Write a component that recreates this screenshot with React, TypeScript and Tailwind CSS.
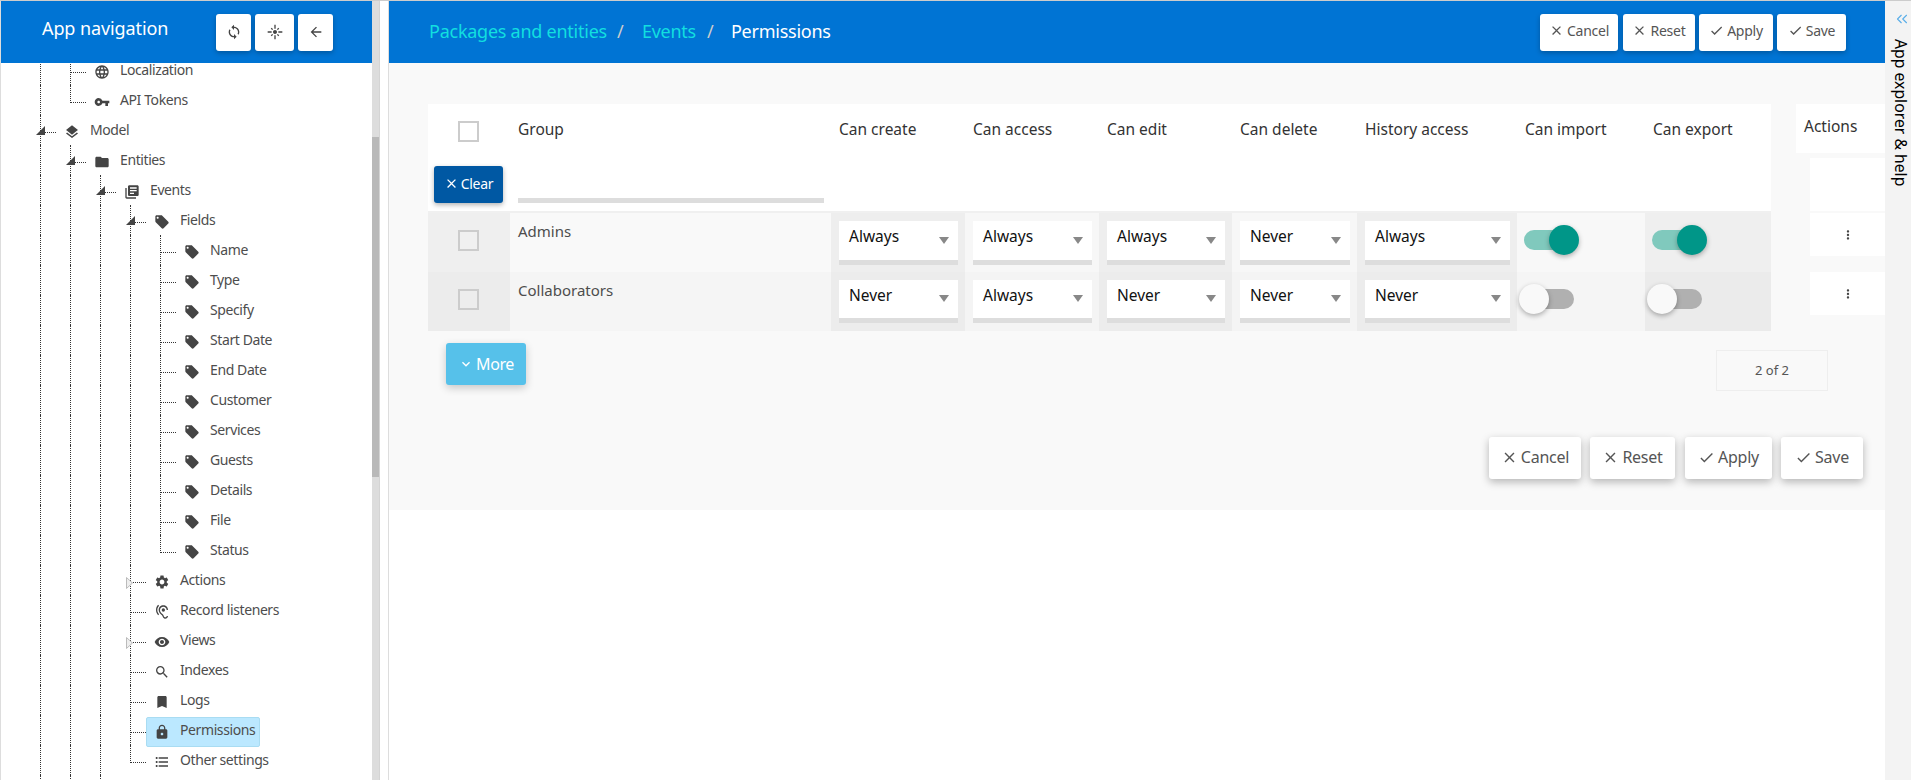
import type { ReactNode } from "react";
import type { IconType } from "react-icons";
import { ChevronsLeft } from "lucide-react";
import {
  MdArrowBack,
  MdBookmark,
  MdCheck,
  MdClose,
  MdExpandMore,
  MdFlare,
  MdFolder,
  MdFormatListBulleted,
  MdHearing,
  MdLanguage,
  MdLayers,
  MdLibraryBooks,
  MdLocalOffer,
  MdLock,
  MdMoreVert,
  MdSearch,
  MdSettings,
  MdSync,
  MdVisibility,
  MdVpnKey,
} from "react-icons/md";

type TreeRow = {
  label: string;
  icon: IconType;
  depth: number;
  last?: boolean;
  toggle?: "open" | "closed";
  active?: boolean;
};

const treeRows: TreeRow[] = [
  { label: "Localization", icon: MdLanguage, depth: 1 },
  { label: "API Tokens", icon: MdVpnKey, depth: 1, last: true },
  { label: "Model", icon: MdLayers, depth: 0, toggle: "open" },
  { label: "Entities", icon: MdFolder, depth: 1, toggle: "open" },
  { label: "Events", icon: MdLibraryBooks, depth: 2, toggle: "open" },
  { label: "Fields", icon: MdLocalOffer, depth: 3, toggle: "open" },
  { label: "Name", icon: MdLocalOffer, depth: 4 },
  { label: "Type", icon: MdLocalOffer, depth: 4 },
  { label: "Specify", icon: MdLocalOffer, depth: 4 },
  { label: "Start Date", icon: MdLocalOffer, depth: 4 },
  { label: "End Date", icon: MdLocalOffer, depth: 4 },
  { label: "Customer", icon: MdLocalOffer, depth: 4 },
  { label: "Services", icon: MdLocalOffer, depth: 4 },
  { label: "Guests", icon: MdLocalOffer, depth: 4 },
  { label: "Details", icon: MdLocalOffer, depth: 4 },
  { label: "File", icon: MdLocalOffer, depth: 4 },
  { label: "Status", icon: MdLocalOffer, depth: 4, last: true },
  { label: "Actions", icon: MdSettings, depth: 3, toggle: "closed" },
  { label: "Record listeners", icon: MdHearing, depth: 3 },
  { label: "Views", icon: MdVisibility, depth: 3, toggle: "closed" },
  { label: "Indexes", icon: MdSearch, depth: 3 },
  { label: "Logs", icon: MdBookmark, depth: 3 },
  { label: "Permissions", icon: MdLock, depth: 3, active: true },
  { label: "Other settings", icon: MdFormatListBulleted, depth: 3, last: true },
];

function Guide() {
  return <span className="h-[30px] w-[30px] shrink-0 border-l border-dotted border-[#333]" />;
}

function Row({ row }: { row: TreeRow }) {
  const Icon = row.icon;
  return (
    <div className="flex h-[30px] pl-[39px]">
      {Array.from({ length: row.depth }, (_, i) => (
        <Guide key={i} />
      ))}
      {/* connector into the node, the toggle triangle sits on top of it */}
      <span className={`relative w-[16px] shrink-0 border-l border-dotted border-[#333] ${row.last ? "h-[18px]" : "h-[30px]"}`}>
        <span className="block h-[18px] border-b border-dotted border-[#333]" />
        {row.toggle === "open" && (
          <svg width="9" height="9" viewBox="0 0 9 9" className="absolute left-[-5px] top-[11px]">
            <path d="M9 0V9H0Z" fill="#444" />
          </svg>
        )}
        {row.toggle === "closed" && (
          <svg width="7" height="12" viewBox="0 0 7 12" className="absolute left-[-5px] top-[12px]">
            <path d="M0.5 0.5L6.5 6L0.5 11.5Z" fill="#eee" stroke="#bbb" />
          </svg>
        )}
      </span>
      <div
        className={`mt-[2px] flex h-[30px] items-center gap-[10px] rounded-[2px] border pb-[6px] pl-[7px] pr-[4px] text-[14px] tracking-[-0.4px] text-[#4d4d4d] ${
          row.active ? "border-[#a9dcf2] bg-[#bbe8ff]" : "border-transparent"
        }`}
      >
        <Icon size={16} className="mt-[5px] shrink-0 text-[#444]" />
        <span className="whitespace-nowrap">{row.label}</span>
      </div>
    </div>
  );
}

function Btn({ className, children }: { className: string; children: ReactNode }) {
  return (
    <button className={`flex shrink-0 items-center justify-center rounded-[3px] ${className}`}>
      {children}
    </button>
  );
}

function TopBtn({ w, icon: Icon, label }: { w: string; icon: IconType; label: string }) {
  return (
    <Btn className={`${w} h-[37px] gap-[3px] bg-white pb-[3px] text-[14px] tracking-[-0.25px] text-[#555] shadow-[0_2px_5px_rgba(0,0,0,0.25)]`}>
      <Icon size={15} />
      {label}
    </Btn>
  );
}

function BottomBtn({ w, icon: Icon, label }: { w: string; icon: IconType; label: string }) {
  return (
    <Btn className={`${w} h-[42px] gap-[3px] bg-white pb-[2px] text-[16px] tracking-[-0.25px] text-[#555] shadow-[0_3px_8px_rgba(0,0,0,0.28)]`}>
      <Icon size={17} />
      {label}
    </Btn>
  );
}

function Checkbox({ bg }: { bg: string }) {
  return <span className={`block h-[21px] w-[21px] border-2 border-[#ccc] ${bg}`} />;
}

function Select({ value, h }: { value: string; h: string }) {
  return (
    <div className={`flex ${h} items-center justify-between border-b-[5px] border-[#ddd] bg-white pb-[7px] pl-[10px] pr-[9px] text-[15.5px] text-[#111]`}>
      {value}
      <svg width="10" height="7" viewBox="0 0 10 7" className="mt-[6px]">
        <path d="M0 0H10L5 7Z" fill="#888" />
      </svg>
    </div>
  );
}

function Toggle({ on }: { on: boolean }) {
  return (
    <div className={`relative h-[20px] w-[50px] rounded-full ${on ? "bg-[#80c9bd]" : "bg-[#b0b0b0]"}`}>
      <span
        className={`absolute top-[-5px] h-[30px] w-[30px] rounded-full shadow-[0_2px_5px_rgba(0,0,0,0.3)] ${
          on ? "left-[25px] bg-[#009688]" : "left-[-5px] bg-[#f9f9f9]"
        }`}
      />
    </div>
  );
}

const headerCols = ["Can create", "Can access", "Can edit", "Can delete", "History access", "Can import", "Can export"];

const permRows = [
  { name: "Admins", values: ["Always", "Always", "Always", "Never", "Always"], on: true, sel: "h-[44px]" },
  { name: "Collaborators", values: ["Never", "Always", "Never", "Never", "Never"], on: false, sel: "h-[43px]" },
];

export default function App() {
  return (
    <div className="flex h-screen w-full overflow-hidden border-t border-[#ccc] bg-white [font-family:'Noto_Sans',sans-serif]">
      {/* left navigation */}
      <aside className="flex h-full w-[389px] shrink-0 border-x border-l-[#ddd] border-r-[#ddd]">
        <div className="flex h-full w-[371px] shrink-0 flex-col overflow-hidden">
          <div className="relative z-10 flex h-[62px] shrink-0 items-center bg-[#0074d4] pl-[41px]">
            <span className="w-[174px] pb-[8px] text-[18px] tracking-[-0.1px] text-white">App navigation</span>
            <div className="flex gap-[4px]">
              <Btn className="h-[37px] w-[35px] bg-white text-[#444] shadow-[0_2px_5px_rgba(0,0,0,0.25)]">
                <MdSync size={16} />
              </Btn>
              <Btn className="h-[37px] w-[39px] bg-white text-[#444] shadow-[0_2px_5px_rgba(0,0,0,0.25)]">
                <MdFlare size={16} />
              </Btn>
              <Btn className="h-[37px] w-[35px] bg-white text-[#444] shadow-[0_2px_5px_rgba(0,0,0,0.25)]">
                <MdArrowBack size={16} />
              </Btn>
            </div>
          </div>
          <div className="mt-[-8px]">
            {treeRows.map((row) => (
              <Row key={row.label} row={row} />
            ))}
            <div className="flex h-[30px] pl-[39px]">
              <Guide />
              <Guide />
              <Guide />
            </div>
          </div>
        </div>
        <div className="h-full w-[8px] shrink-0 border-r border-[#d4d4d4] bg-[#ddd]">
          <div className="mt-[136px] h-[340px] bg-[#b9b9b9]" />
        </div>
      </aside>

      {/* main content */}
      <main className="flex min-w-0 flex-1 flex-col">
        <header className="flex h-[62px] shrink-0 items-center justify-between bg-[#0074d4] pl-[40px] pr-[39px]">
          <nav className="flex items-center pb-[2px] text-[18px] tracking-[-0.25px]">
            <span className="text-[#12dfe0]">Packages and entities</span>
            <span className="w-[35px] pl-[10px] text-[#ccc]">/</span>
            <span className="text-[#12dfe0]">Events</span>
            <span className="w-[35px] pl-[11px] text-[#ccc]">/</span>
            <span className="text-white">Permissions</span>
          </nav>
          <div className="flex">
            <TopBtn w="w-[78px] mr-[5px]" icon={MdClose} label="Cancel" />
            <TopBtn w="w-[72px] mr-[4px]" icon={MdClose} label="Reset" />
            <TopBtn w="w-[74px] mr-[4px]" icon={MdCheck} label="Apply" />
            <TopBtn w="w-[69px]" icon={MdCheck} label="Save" />
          </div>
        </header>

        <section className="h-[447px] bg-[#f9f9f9] pl-[39px] pt-[41px]">
          <div className="flex items-start">
            <div className="grid w-[1343px] grid-cols-[82px_321px_134px_134px_133px_125px_160px_128px_126px] bg-[#f0f0f0]">
              {/* head */}
              <div className="flex h-[107px] flex-col items-start justify-between bg-white pb-[8px] pl-[6px] pt-[17px]">
                <span className="ml-[24px]">
                  <Checkbox bg="bg-white" />
                </span>
                <Btn className="h-[37px] w-[69px] gap-[2px] bg-[#0058a3] pb-[2px] text-[14px] tracking-[-0.3px] text-white shadow-[0_2px_5px_rgba(0,0,0,0.3)]">
                  <MdClose size={15} />
                  Clear
                </Btn>
              </div>
              <div className="flex h-[107px] flex-col justify-between bg-white pb-[8px] pl-[8px] pr-[7px] pt-[14px] text-[15.5px] leading-[22px] text-[#333]">
                Group
                <div className="h-[5px] bg-[#ddd]" />
              </div>
              {headerCols.map((col) => (
                <div key={col} className="h-[107px] bg-white pl-[8px] pt-[14px] text-[15.5px] leading-[22px] text-[#333]">
                  {col}
                </div>
              ))}
              <div className="col-span-9 h-[2px]" />

              {/* body */}
              {permRows.map((row, r) => (
                <div key={row.name} className="contents">
                  <div className={`flex h-[59px] items-start pl-[30px] pt-[17px] ${r === 0 ? "bg-[#efefef]" : "bg-[#ececec]"}`}>
                    <Checkbox bg={r === 0 ? "bg-[#f0f0f0]" : "bg-[#ededed]"} />
                  </div>
                  <div className={`h-[59px] pl-[8px] pt-[7px] text-[15px] leading-[22px] text-[#4d4d4d] ${r === 0 ? "bg-[#f9f9f9]" : "bg-[#f5f5f5]"}`}>
                    {row.name}
                  </div>
                  {row.values.map((v, c) => (
                    <div
                      key={c}
                      className={`h-[59px] pl-[8px] pr-[7px] pt-[8px] ${
                        c % 2 === 0
                          ? r === 0 ? "bg-[#eeeeee]" : "bg-[#ececec]"
                          : r === 0 ? "bg-[#f7f7f7]" : "bg-[#f4f4f4]"
                      }`}
                    >
                      <Select value={v} h={row.sel} />
                    </div>
                  ))}
                  <div className={`h-[59px] pl-[7px] pt-[17px] ${r === 0 ? "bg-[#f8f8f8]" : "bg-[#f5f5f5]"}`}>
                    <Toggle on={row.on} />
                  </div>
                  <div className={`h-[59px] pl-[7px] pt-[17px] ${r === 0 ? "bg-[#efefef]" : "bg-[#ebebeb]"}`}>
                    <Toggle on={row.on} />
                  </div>
                </div>
              ))}
            </div>

            {/* actions column */}
            <div className="ml-[25px] flex w-[89px] flex-col items-end">
              <div className="h-[49px] w-full bg-white pl-[8px] pt-[11px] text-[15.5px] leading-[22px] text-[#333]">Actions</div>
              <div className="mt-[5px] h-[53px] w-[75px] bg-white" />
              <div className="mt-[2px] flex h-[43px] w-[75px] items-center justify-center bg-white text-[#444]">
                <MdMoreVert size={14} />
              </div>
              <div className="mt-[16px] flex h-[43px] w-[75px] items-center justify-center bg-white text-[#444]">
                <MdMoreVert size={14} />
              </div>
            </div>
          </div>

          <div className="flex h-[60px] items-start justify-between pl-[18px] pr-[57px]">
            <Btn className="mt-[12px] h-[42px] w-[80px] gap-[2px] bg-[#56c1ea] text-[16px] tracking-[-0.4px] text-white shadow-[0_3px_8px_rgba(0,0,0,0.2)]">
              <MdExpandMore size={16} />
              More
            </Btn>
            <div className="mt-[19px] flex h-[41px] w-[112px] items-center justify-center border border-[#eeeeee] text-[13px] text-[#555]">
              2 of 2
            </div>
          </div>

          <div className="mt-[46px] flex justify-end pr-[22px]">
            <BottomBtn w="w-[92px] mr-[9px]" icon={MdClose} label="Cancel" />
            <BottomBtn w="w-[85px] mr-[10px]" icon={MdClose} label="Reset" />
            <BottomBtn w="w-[87px] mr-[9px]" icon={MdCheck} label="Apply" />
            <BottomBtn w="w-[82px]" icon={MdCheck} label="Save" />
          </div>
        </section>
      </main>

      {/* collapsed right panel */}
      <aside className="flex h-full w-[26px] shrink-0 flex-col items-end bg-[#f3f3f3] pt-[9px]">
        <ChevronsLeft size={18} strokeWidth={1.5} className="text-[#5aaee8]" />
        <span className="mr-[1px] mt-[11px] whitespace-nowrap text-[15.75px] leading-[18px] text-black [writing-mode:vertical-rl]">
          App explorer &amp; help
        </span>
      </aside>
    </div>
  );
}
